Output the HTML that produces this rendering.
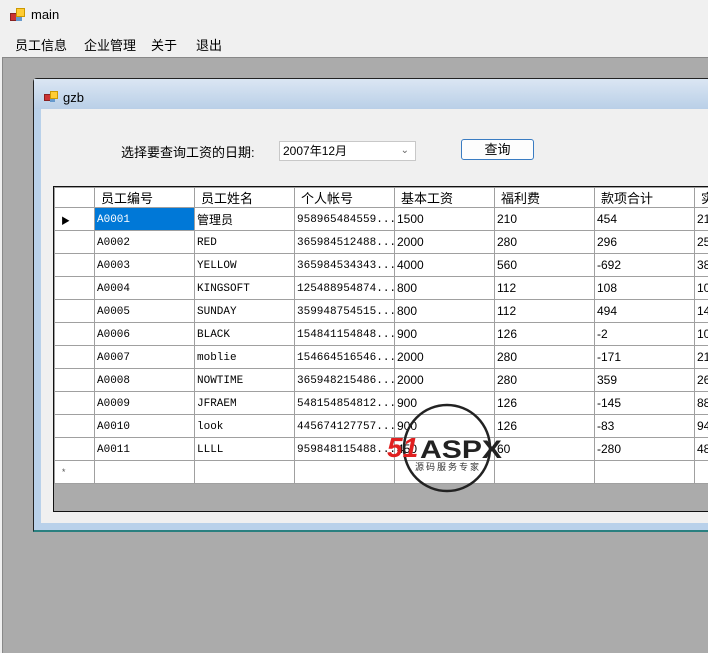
<html><head><style>
body{margin:0;width:708px;height:652px;overflow:hidden;background:#f0f0f0;font-family:"Liberation Sans","Noto Sans CJK SC",sans-serif;position:relative}
.a{position:absolute}
.ic{position:absolute;width:14px;height:14px}
.ic i{position:absolute;display:block}
table{border-collapse:collapse;font-size:12px;table-layout:fixed}
tr{height:23px}
tr.h{height:20px}
td{border:1px solid #a0a0a0;padding:2px 2px 0 2px;white-space:nowrap;overflow:hidden;font-family:"Liberation Mono","Noto Serif CJK SC",monospace;font-size:11px;vertical-align:middle}
tr.h td{background:#fff;font-family:"Liberation Sans","Noto Sans CJK SC",sans-serif;font-size:13px;padding:0 0 0 6px}
td.n{font-family:"Liberation Sans","Noto Sans CJK SC",sans-serif;font-size:12px;padding-top:0}
</style></head><body>
<div class="ic" style="left:10px;top:8px"><i style="left:0;top:5px;width:6px;height:6px;background:#c33;border:1px solid #822"></i><i style="left:6px;top:0;width:7px;height:7px;background:#fc3;border:1px solid #c90"></i><i style="left:6px;top:9px;width:6px;height:4px;background:#69c"></i></div>
<div class="a" style="left:31px;top:7px;font-size:13px">main</div>
<div class="a" style="left:15px;top:35px;font-size:13px">员工信息</div>
<div class="a" style="left:84px;top:35px;font-size:13px">企业管理</div>
<div class="a" style="left:151px;top:35px;font-size:13px">关于</div>
<div class="a" style="left:196px;top:35px;font-size:13px">退出</div>
<div class="a" style="left:2px;top:57px;width:706px;height:595px;background:#ababab;border-top:1px solid #888;border-left:1px solid #888"></div>
<div class="a" style="left:33px;top:78px;width:675px;height:451px;background:#b9d1ea;border:1px solid #222;border-right:none;border-bottom:2px solid #2a8080;border-radius:4px 0 0 0"></div>
<div class="a" style="left:34px;top:79px;width:674px;height:30px;background:linear-gradient(#dbe6f3,#b9cfe7)"></div>
<div class="ic" style="left:44px;top:91px"><i style="left:0;top:3px;width:5px;height:5px;background:#c33;border:1px solid #822"></i><i style="left:6px;top:0;width:6px;height:6px;background:#fc3;border:1px solid #c90"></i><i style="left:6px;top:8px;width:5px;height:3px;background:#69c"></i></div>
<div class="a" style="left:63px;top:90px;font-size:13px">gzb</div>
<div class="a" style="left:41px;top:109px;width:667px;height:414px;background:#f0f0f0"></div>
<div class="a" style="left:121px;top:142px;font-size:13px">选择要查询工资的日期:</div>
<div class="a" style="left:279px;top:141px;background:#fff;border:1px solid #c8c8c8;font-size:12px;line-height:18px;padding-left:3px;box-sizing:border-box;width:137px;height:20px">2007年12月<span style="position:absolute;right:6px;top:0;color:#666;font-size:10px">&#8964;</span></div>
<div class="a" style="left:461px;top:139px;width:71px;height:19px;border:1px solid #3a7cc2;border-radius:3px;background:#fdfdfd;font-size:13px;text-align:center;line-height:19px">查询</div>
<div class="a" style="left:53px;top:186px;width:655px;height:324px;background:#ababab;border:1px solid #111;border-right:none;overflow:hidden">
<table style="width:760px;background:#fff">
<colgroup><col style="width:40px"><col style="width:100px"><col style="width:100px"><col style="width:100px"><col style="width:100px"><col style="width:100px"><col style="width:100px"><col style="width:120px"></colgroup>
<tr class="h"><td></td><td>员工编号</td><td>员工姓名</td><td>个人帐号</td><td>基本工资</td><td>福利费</td><td>款项合计</td><td>实</td></tr>
<tr><td style="font-size:9px;padding-left:6px">&#9654;</td><td style="background:#0078d7;color:#fff">A0001</td><td class="n">管理员</td><td>958965484559...</td><td class="n">1500</td><td class="n">210</td><td class="n">454</td><td class="n">21</td></tr>
<tr><td></td><td>A0002</td><td>RED</td><td>365984512488...</td><td class="n">2000</td><td class="n">280</td><td class="n">296</td><td class="n">25</td></tr>
<tr><td></td><td>A0003</td><td>YELLOW</td><td>365984534343...</td><td class="n">4000</td><td class="n">560</td><td class="n">-692</td><td class="n">38</td></tr>
<tr><td></td><td>A0004</td><td>KINGSOFT</td><td>125488954874...</td><td class="n">800</td><td class="n">112</td><td class="n">108</td><td class="n">10</td></tr>
<tr><td></td><td>A0005</td><td>SUNDAY</td><td>359948754515...</td><td class="n">800</td><td class="n">112</td><td class="n">494</td><td class="n">14</td></tr>
<tr><td></td><td>A0006</td><td>BLACK</td><td>154841154848...</td><td class="n">900</td><td class="n">126</td><td class="n">-2</td><td class="n">10</td></tr>
<tr><td></td><td>A0007</td><td>moblie</td><td>154664516546...</td><td class="n">2000</td><td class="n">280</td><td class="n">-171</td><td class="n">21</td></tr>
<tr><td></td><td>A0008</td><td>NOWTIME</td><td>365948215486...</td><td class="n">2000</td><td class="n">280</td><td class="n">359</td><td class="n">26</td></tr>
<tr><td></td><td>A0009</td><td>JFRAEM</td><td>548154854812...</td><td class="n">900</td><td class="n">126</td><td class="n">-145</td><td class="n">88</td></tr>
<tr><td></td><td>A0010</td><td>look</td><td>445674127757...</td><td class="n">900</td><td class="n">126</td><td class="n">-83</td><td class="n">94</td></tr>
<tr><td></td><td>A0011</td><td>LLLL</td><td>959848115488...</td><td class="n">450</td><td class="n">60</td><td class="n">-280</td><td class="n">48</td></tr>
<tr><td style="font-size:9px;padding-left:6px;color:#555">*</td><td></td><td></td><td></td><td></td><td></td><td></td><td></td></tr>
</table></div>
<svg class="a" style="left:385px;top:402px" width="130" height="92" viewBox="0 0 130 92"><circle cx="62" cy="46" r="43" fill="none" stroke="#222" stroke-width="2.5"/>
<text x="2" y="55" font-family="Liberation Sans" font-weight="bold" font-style="italic" font-size="28" fill="#e02020">51</text>
<text x="35" y="56" font-family="Liberation Sans" font-weight="bold" font-size="25" fill="#222" textLength="82" lengthAdjust="spacingAndGlyphs">ASPX</text>
<text x="30" y="68" font-family="Noto Sans CJK SC,sans-serif" font-size="9" fill="#333" letter-spacing="2">源码服务专家</text></svg>
</body></html>
